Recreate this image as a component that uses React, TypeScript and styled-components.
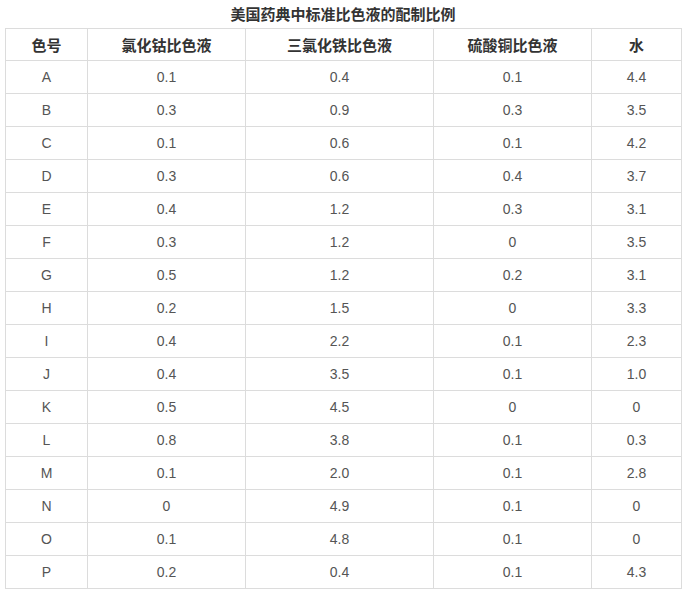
import { createGlobalStyle } from "styled-components";
import styled from "styled-components";

const GlobalStyle = createGlobalStyle`
  body {
    margin: 0;
    background: #fff;
    font-family: "Liberation Sans", "Noto Sans CJK SC", Arial, sans-serif;
  }
`;

const StyledContainer = styled.main`
  padding: 4px 0 0 5px;
  width: 676px;
`;

const StyledTitle = styled.h1`
  margin: 0;
  height: 24px;
  line-height: 20px;
  text-align: center;
  font-size: 15px;
  font-weight: bold;
  color: #333;
  font-family: "Noto Sans CJK SC", sans-serif;
`;

const StyledTable = styled.table`
  border-collapse: collapse;
  width: 676px;
  table-layout: fixed;
`;

const StyledCol = styled.col<{ $w: number }>`
  width: ${(p) => p.$w}px;
`;

const StyledHeadCell = styled.th`
  height: 31px;
  padding: 0;
  border: 1px solid #dcdcdc;
  font-size: 15px;
  font-weight: bold;
  color: #333;
  text-align: center;
  font-family: "Noto Sans CJK SC", sans-serif;
`;

const StyledCell = styled.td`
  height: 32px;
  padding: 0;
  border: 1px solid #dcdcdc;
  font-size: 14px;
  color: #555;
  text-align: center;
  font-family: "Liberation Sans", Arial, sans-serif;
`;

const columns = [
  { title: "色号", w: 82 },
  { title: "氯化钴比色液", w: 158 },
  { title: "三氯化铁比色液", w: 188 },
  { title: "硫酸铜比色液", w: 158 },
  { title: "水", w: 90 },
];

const rows = [
  ["A", "0.1", "0.4", "0.1", "4.4"],
  ["B", "0.3", "0.9", "0.3", "3.5"],
  ["C", "0.1", "0.6", "0.1", "4.2"],
  ["D", "0.3", "0.6", "0.4", "3.7"],
  ["E", "0.4", "1.2", "0.3", "3.1"],
  ["F", "0.3", "1.2", "0", "3.5"],
  ["G", "0.5", "1.2", "0.2", "3.1"],
  ["H", "0.2", "1.5", "0", "3.3"],
  ["I", "0.4", "2.2", "0.1", "2.3"],
  ["J", "0.4", "3.5", "0.1", "1.0"],
  ["K", "0.5", "4.5", "0", "0"],
  ["L", "0.8", "3.8", "0.1", "0.3"],
  ["M", "0.1", "2.0", "0.1", "2.8"],
  ["N", "0", "4.9", "0.1", "0"],
  ["O", "0.1", "4.8", "0.1", "0"],
  ["P", "0.2", "0.4", "0.1", "4.3"],
];

export default function App() {
  return (
    <>
      <GlobalStyle />
      <StyledContainer>
        <StyledTitle>美国药典中标准比色液的配制比例</StyledTitle>
        <StyledTable>
          <colgroup>
            {columns.map((c) => (
              <StyledCol key={c.title} $w={c.w} />
            ))}
          </colgroup>
          <thead>
            <tr>
              {columns.map((c) => (
                <StyledHeadCell key={c.title}>{c.title}</StyledHeadCell>
              ))}
            </tr>
          </thead>
          <tbody>
            {rows.map((r) => (
              <tr key={r[0]}>
                {r.map((v, i) => (
                  <StyledCell key={i}>{v}</StyledCell>
                ))}
              </tr>
            ))}
          </tbody>
        </StyledTable>
      </StyledContainer>
    </>
  );
}
